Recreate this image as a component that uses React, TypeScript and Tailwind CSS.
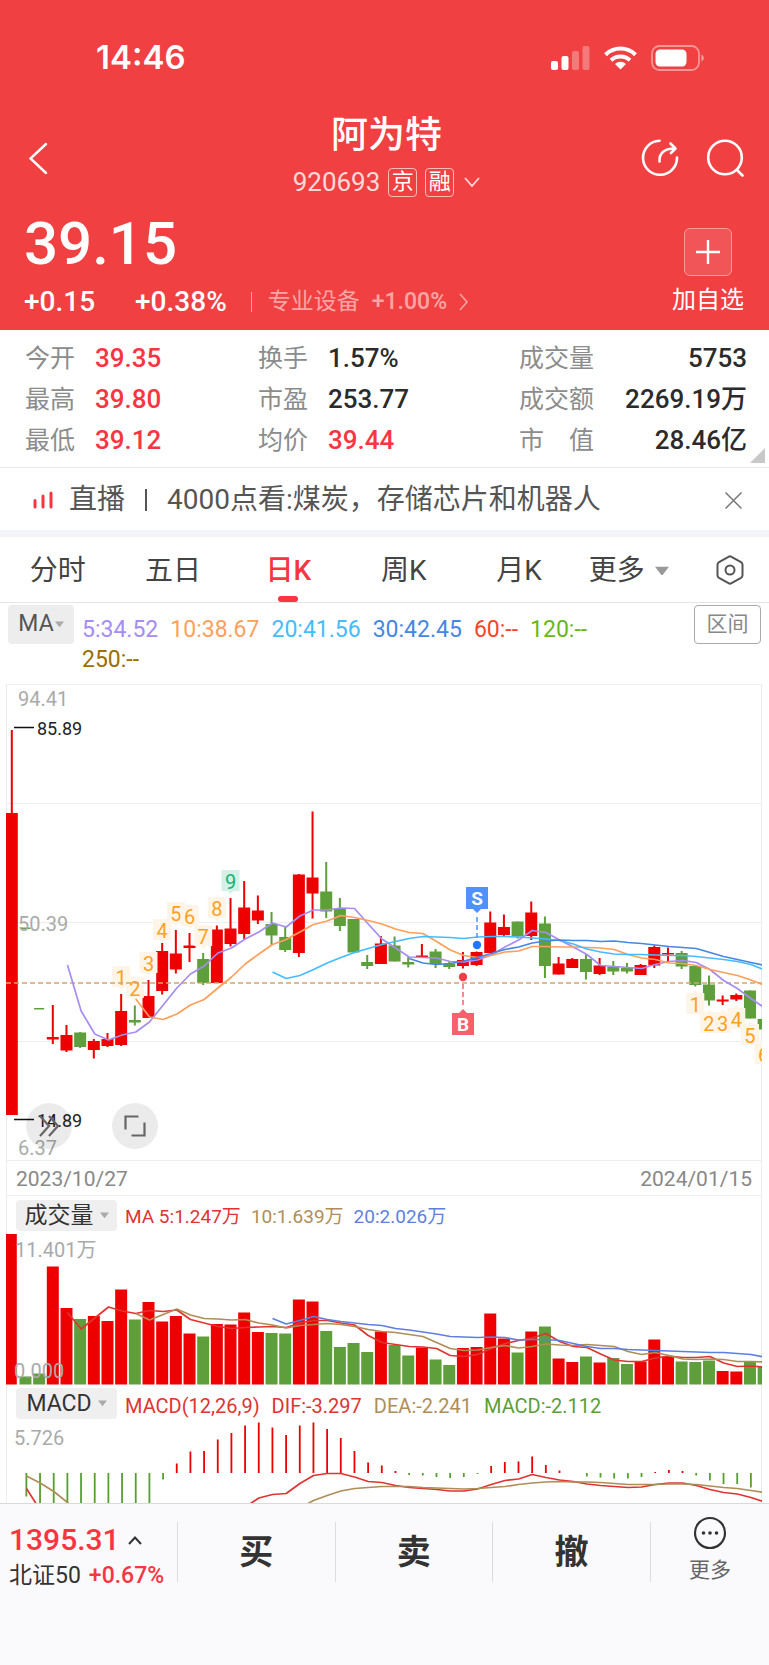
import React from 'react';

type Candle = ['r' | 'g', number, number, number, number];

const RED = '#ee0000';
const GREEN = '#5f9f3b';

// colour, high, body top, body bottom, low
const candles: Candle[] = [
    ['r', 730, 813, 1115, 1115], ['g', 928, 927.5, 929, 929], ['g', 1008, 1008, 1009.5, 1009],
    ['r', 1005, 1037, 1039.5, 1044], ['r', 1025, 1035, 1050.5, 1052], ['g', 1032, 1032.5, 1047, 1048],
    ['r', 1039, 1041, 1050, 1058.5], ['r', 1033, 1039, 1046, 1047], ['r', 994, 1011, 1045, 1046],
    ['g', 1005.5, 1020, 1022.5, 1025.5], ['r', 980, 996, 1018, 1018], ['r', 943, 951, 991, 994.5],
    ['r', 930, 953.5, 969.5, 973.5], ['r', 933, 945.5, 948, 962], ['g', 953, 959, 983, 985],
    ['r', 925.5, 929.5, 983, 983], ['r', 898, 928.5, 944, 946.5], ['r', 881, 907.5, 934, 939],
    ['r', 895.5, 910.5, 920.5, 924], ['g', 912, 924, 935.5, 945], ['g', 927, 937, 950, 952],
    ['r', 874, 874.5, 953, 957], ['r', 811.5, 877.5, 893.5, 918.5], ['g', 862, 891.5, 911.5, 918],
    ['g', 898, 908.5, 926, 931], ['g', 919, 919, 952.5, 952.5], ['g', 955, 962, 966, 969],
    ['r', 936, 943.5, 964, 964], ['g', 936.5, 945.5, 961.5, 961.5], ['g', 956.5, 962, 964.5, 967.5],
    ['r', 944, 955.5, 957.5, 957.5], ['g', 949, 951.5, 964, 968], ['g', 962, 963.5, 967, 969],
    ['r', 952, 960, 966, 968.5], ['r', 951.5, 952, 965, 966], ['r', 911.5, 922.5, 953, 953],
    ['r', 914.5, 927, 935, 936], ['g', 921.5, 921.5, 936.5, 938.5], ['r', 901.5, 912.5, 936, 940],
    ['g', 916.5, 923.5, 966, 978], ['r', 957, 963.5, 974.5, 974.5], ['r', 958, 959, 968, 968],
    ['g', 954.5, 959, 972, 979.5], ['r', 958, 965.5, 974, 975], ['g', 961, 967, 971.5, 975],
    ['g', 963, 968, 971.5, 973.5], ['r', 964, 965, 975, 975], ['r', 945.5, 947, 965.5, 968],
    ['r', 947.5, 953, 954.5, 961.5], ['g', 951, 953, 966.5, 969], ['g', 965.5, 966, 985, 986.5],
    ['g', 975.5, 984.5, 1000.5, 1005.5], ['r', 995.5, 999.5, 1001.5, 1005], ['r', 993.5, 995, 999.5, 1001],
    ['g', 990.5, 990.5, 1018.5, 1018.5], ['g', 1019, 1019, 1029.5, 1029.5],
];

const priceLines = [
    { color: '#a68cf5', from: 4, ys: [965, 1011, 1034, 1040, 1035, 1032, 1022, 1005, 988, 974, 966, 953, 948, 939, 932, 923, 927, 916, 910, 910, 908, 908.5, 924, 939, 948, 957, 957.5, 958, 961.5, 962, 960, 955, 947, 940, 930.5, 932.5, 940, 947, 954.5, 965.5, 966.5, 967.5, 968.5, 964.5, 961.5, 960.5, 962.5, 969.5, 980.5, 988.5, 998.5, 1008] },
    { color: '#ff9f5c', from: 9, ys: [999, 1017, 1019.5, 1014, 1005, 999.5, 988, 977, 964, 954, 944.5, 939.5, 932, 924.5, 921, 915.5, 917.5, 920.5, 924, 929, 932.5, 933.5, 941.5, 950, 955.5, 957.5, 955.5, 952, 951, 946.5, 946.5, 947, 947, 947.5, 948, 949.5, 954.5, 958, 959.5, 963, 963.5, 965.5, 969.5, 972.5, 975.5, 980, 985.5] },
    { color: '#45bcff', from: 19, ys: [972, 978.5, 975.5, 969.5, 963, 957.5, 952.5, 948.5, 944.5, 941.5, 938.5, 936.5, 937, 937.5, 938.5, 937, 936.5, 936.5, 937, 938, 939, 940.5, 944, 949, 952, 954, 954.5, 954.5, 955, 955.5, 955.5, 956.5, 958, 959.5, 961.5, 964.5, 970] },
    { color: '#4587e6', from: 29, ys: [958.5, 963, 964.5, 963.5, 961, 957.5, 953.5, 949.5, 947, 943, 941, 940, 940.5, 940.5, 941.5, 941, 942.5, 943.5, 945, 946.5, 947.5, 948.5, 952.5, 956.5, 959.5, 962.5, 965.5] },
];

// candle index, label, box top
const counts: [number, string, number][] = [
    [8, '1', 966], [9, '2', 977], [10, '3', 952], [11, '4', 919], [12, '5', 902], [13, '6', 905],
    [14, '7', 925], [15, '8', 897], [16, '9', 870],
    [50, '1', 993], [51, '2', 1012], [52, '3', 1012], [53, '4', 1008], [54, '5', 1024], [55, '6', 1043],
];

const volumes = [
    1234, 1376.5, 1373.5, 1266.5, 1308, 1319, 1316, 1321, 1289.5, 1319.5, 1302, 1321.5, 1316, 1333.5, 1336.5,
    1324, 1324.5, 1312.5, 1332, 1333, 1333.5, 1299.5, 1301.5, 1331, 1347, 1343, 1352, 1331.5, 1345, 1355.5,
    1347.5, 1359.5, 1365, 1348, 1347, 1313.5, 1338.5, 1352.5, 1331.5, 1326.5, 1358.5, 1362, 1356.5, 1362.5,
    1358, 1364, 1361.5, 1339.5, 1356.5, 1361.5, 1362, 1360.5, 1371, 1371.5, 1361.5, 1366.5,
];

const volumeLines = [
    { color: '#e03430', from: 4, ys: [1312.5, 1329, 1318, 1307, 1311, 1313.5, 1310.5, 1311.5, 1310, 1319.5, 1323, 1326.5, 1328.5, 1327.5, 1327, 1326.5, 1327.5, 1323, 1320.5, 1320.5, 1323, 1325, 1335.5, 1342.5, 1344.5, 1346.5, 1347, 1348.5, 1355.5, 1356.5, 1354.5, 1348.5, 1343.5, 1340.5, 1338, 1333.5, 1341.5, 1346.5, 1347.5, 1354, 1360, 1361.5, 1361.5, 1358, 1356, 1357.5, 1357.5, 1356.5, 1363, 1366.5, 1366, 1367] },
    { color: '#b08d57', from: 9, ys: [1313.5, 1320, 1314.5, 1309, 1315, 1318.5, 1319, 1320, 1319.5, 1323, 1325, 1328, 1325.5, 1324.5, 1323.5, 1324.5, 1326.5, 1329.5, 1331.5, 1332.5, 1334.5, 1336.5, 1342.5, 1348.5, 1350.5, 1350, 1347.5, 1345.5, 1348, 1346.5, 1344, 1345, 1345.5, 1344.5, 1345.5, 1346.5, 1351.5, 1354.5, 1352.5, 1355.5, 1359, 1359.5, 1359, 1359.5, 1361.5, 1361.5, 1362] },
    { color: '#5f7fe0', from: 19, ys: [1318.5, 1324, 1320.5, 1316.5, 1319.5, 1321.5, 1323, 1324.5, 1325.5, 1328.5, 1330, 1332, 1334, 1336.5, 1337, 1337.5, 1337, 1337.5, 1340, 1339.5, 1339.5, 1340.5, 1343.5, 1346.5, 1348.5, 1348.5, 1349.5, 1350, 1350.5, 1351, 1351.5, 1352, 1352.5, 1352.5, 1353.5, 1354.5, 1357] },
];

// bar ends for the histogram, the first one belongs to index 1
const macdBars = [
    1496.5, 1510, 1510, 1510, 1510, 1510, 1510, 1510, 1510, 1510, 1479.5, 1463.5, 1451.5, 1451, 1439.5, 1433,
    1425.5, 1422.5, 1427.5, 1435, 1425.5, 1422.5, 1429, 1438, 1451, 1462.5, 1465.5, 1471, 1475, 1475.5, 1477,
    1478, 1477, 1474, 1466, 1462, 1461.5, 1456.5, 1465, 1470.5, 1473, 1476.5, 1477.5, 1478.5, 1478.5, 1477,
    1472, 1470, 1471, 1475.5, 1480.5, 1484, 1484, 1487.5,
];

const macdLines = [
    { color: '#e03430', from: 1, ys: [1488.5, 1510] },
    { color: '#e03430', from: 17, ys: [1507, 1498, 1494.5, 1493.5, 1483.5, 1475.5, 1473.5, 1473.5, 1477, 1481.5, 1482.5, 1485.5, 1487.5, 1488.5, 1489.5, 1491, 1491, 1489, 1484.5, 1480.5, 1479, 1474.5, 1477.5, 1480, 1481.5, 1484, 1485.5, 1486.5, 1487.5, 1487, 1484.5, 1483, 1483, 1485.5, 1489.5, 1492.5, 1494, 1497.5, 1502] },
    { color: '#b08d57', from: 1, ys: [1476, 1483, 1491.5, 1502.5, 1514] },
    { color: '#b08d57', from: 21, ys: [1508, 1500.5, 1495.5, 1491, 1488.5, 1487.5, 1486.5, 1486.5, 1486.5, 1487.5, 1488, 1488.5, 1489, 1488.5, 1487.5, 1486.5, 1484.5, 1483, 1482, 1481.5, 1482, 1482, 1482.5, 1483.5, 1484.5, 1484.5, 1484.5, 1484, 1484, 1484.5, 1486, 1487.5, 1488.5, 1490.5, 1492.5] },
];

const stats = [
    ['今开', '39.35', true], ['换手', '1.57%', false], ['成交量', '5753', false],
    ['最高', '39.80', true], ['市盈', '253.77', false], ['成交额', '2269.19万', false],
    ['最低', '39.12', true], ['均价', '39.44', true], ['市 值', '28.46亿', false],
] as const;

const legend = [
    ['5:34.52', 'text-[#a68cf5]'], ['10:38.67', 'text-[#ff9f5c]'], ['20:41.56', 'text-[#45bcff]'],
    ['30:42.45', 'text-[#4587e6]'], ['60:--', 'text-[#f5452b]'], ['120:--', 'text-[#66b81a]'],
    ['250:--', 'text-[#9c6f00]'],
];

const cx = (i: number) => 11.8 + 13.67 * i;

const Lines = ({ lines }: { lines: { color: string; from: number; ys: number[] }[] }) => (
    <>
        {lines.map((line, idx) => (
            <polyline
                key={idx}
                fill="none"
                stroke={line.color}
                strokeWidth="1.7"
                strokeLinejoin="round"
                points={line.ys.map((y, i) => `${cx(line.from + i) + 1},${y}`).join(' ')}
            />
        ))}
    </>
);

const Frame = ({ top, height }: { top: number; height: number }) => (
    <path d={`M6.5 ${top}v${height}M761.5 ${top}v${height}`} stroke="#ededed" />
);

const PriceChart = () => (
    <svg viewBox="6 684 756 477" className="block w-full">
        <Frame top={684} height={477} />
        <path d="M6 684.5H762M6 803.5H762M6 922.5H762M6 1041.5H762M6 1160.5H762" stroke="#ededed" />
        {candles.map(([c, hi, top, bottom, low], i) => {
            const w = i === 1 || i === 2 ? 10 : 12;
            return (
                <g key={i} fill={c === 'r' ? RED : GREEN}>
                    <rect x={cx(i) - 1} y={hi} width="2" height={low - hi} />
                    <rect x={cx(i) - w / 2} y={top} width={w} height={bottom - top} />
                </g>
            );
        })}
        {counts.map(([i, label, top]) => (
            <g key={`${i}${label}`}>
                <path
                    d={i < 50
                        ? `M${cx(i) - 9} ${top}h18v21h-6l-3 3l-3 -3h-6z`
                        : `M${cx(i) - 9} ${top}h6l3 -3l3 3h6v21h-18z`}
                    fill={label === '9' ? '#d3f1e6' : '#fff4e8'}
                />
                <text x={cx(i)} y={top + 19} fontSize="20" textAnchor="middle" fill={label === '9' ? '#12b374' : '#ffa11a'}>
                    {label}
                </text>
            </g>
        ))}
        <path d="M6 983H762" stroke="#d0a66f" strokeWidth="1.5" strokeDasharray="5 3" />
        <Lines lines={priceLines} />

        <path d="M466 887h22v22h-7l-4 4l-4 -4h-7z" fill="#4f91ff" />
        <text x="477" y="905" fontSize="19" fontWeight="700" textAnchor="middle" fill="#fff">S</text>
        <path d="M477 917v24" stroke="#4f91ff" strokeWidth="1.5" strokeDasharray="5 3" />
        <circle cx="477" cy="945" r="4.2" fill="#2277ff" />
        <circle cx="463" cy="977" r="4.2" fill="#f53d47" />
        <path d="M463 984v24" stroke="#f9606b" strokeWidth="1.5" strokeDasharray="5 3" />
        <path d="M452 1013h7l4 -4l4 4h7v22h-22z" fill="#f9606b" />
        <text x="463" y="1031" fontSize="19" fontWeight="700" textAnchor="middle" fill="#fff">B</text>

        <g fontSize="20" fill="#aaa">
            <text x="18" y="706">94.41</text>
            <text x="18" y="931">50.39</text>
            <text x="18" y="1155">6.37</text>
        </g>
        <path d="M14 727.5h20M14 1119.5h20" stroke="#111" strokeWidth="1.6" />
        <g fontSize="18" fill="#222">
            <text x="37" y="735">85.89</text>
            <text x="37" y="1127">14.89</text>
        </g>
    </svg>
);

const VolumeChart = () => (
    <svg viewBox="6 1234 756 151" className="block w-full">
        <Frame top={1234} height={151} />
        {volumes.map((top, i) => (
            <rect
                key={i}
                x={cx(i) - 6}
                y={top}
                width={i === 0 ? 11 : 12}
                height={1384.5 - top}
                fill={candles[i][0] === 'r' ? RED : GREEN}
            />
        ))}
        <Lines lines={volumeLines} />
        <g fontSize="20" fill="#aaa">
            <text x="15" y="1257">11.401万</text>
            <text x="14" y="1378">0.000</text>
        </g>
    </svg>
);

const MacdChart = () => (
    <svg viewBox="6 1422 756 81" className="block w-full">
        <Frame top={1422} height={81} />
        {macdBars.map((y, i) => (
            <rect
                key={i}
                x={cx(i + 1)}
                y={Math.min(y, 1473)}
                width="1.8"
                height={Math.abs(y - 1473)}
                fill={y < 1473 ? RED : '#55a02e'}
            />
        ))}
        <Lines lines={macdLines} />
        <text x="14" y="1445" fontSize="20" fill="#aaa">5.726</text>
    </svg>
);

const Triangle = ({ className }: { className: string }) => (
    <svg viewBox="0 0 10 7" className={className}><path d="M0 0.5h10L5 7z" fill="currentColor" /></svg>
);

const Chip = ({ label }: { label: string }) => (
    <button className="flex h-[31px] w-[101px] shrink-0 items-center justify-center gap-1.5 rounded bg-[#efefef] text-[23px] leading-none text-[#333]">
        {label}
        <Triangle className="w-[9px] text-[#aaa]" />
    </button>
);

const StatusBar = () => (
    <div className="flex h-11 items-center justify-between pr-[63px] pl-24">
        <span className="font-['Inter',sans-serif] text-[33px] font-semibold">14:46</span>
        <svg viewBox="0 0 156 28" className="h-7 w-[156px]" fill="#fff">
            <rect x="1" y="17" width="7" height="9" rx="2" />
            <rect x="11.5" y="12" width="7" height="14" rx="2" />
            <rect x="22" y="7" width="7" height="19" rx="2" opacity=".3" />
            <rect x="32.5" y="2" width="7" height="24" rx="2" opacity=".3" />
            <path d="M70.500 25.500l-5.500 -5.500a8 8 0 0 1 11 0z" />
            <g fill="none" stroke="#fff" strokeWidth="4">
                <path d="M61 16.200a14 14 0 0 1 19 0" />
                <path d="M55.500 10.700a21.500 21.500 0 0 1 30 0" />
            </g>
            <rect x="102" y="2" width="47" height="24" rx="7.500" fill="none" stroke="#fff" strokeWidth="1.8" opacity=".45" />
            <rect x="105.500" y="5.500" width="31" height="17" rx="4.500" />
            <path d="M151.500 10.500c3 1.500 3 5.500 0 7z" opacity=".5" />
        </svg>
    </div>
);

const Header = () => (
    <header className="bg-[#f04042] pt-9 text-white">
        <StatusBar />
        <div className="mt-7 grid h-[100px] grid-cols-[1fr_auto_1fr] items-center pr-6 pl-7">
            <button aria-label="返回" className="w-5">
                <svg viewBox="0 0 20 32" className="w-5" fill="none" stroke="#fff" strokeWidth="2.4" strokeLinecap="round">
                    <path d="M18 2L2.500 16.500L18 31" />
                </svg>
            </button>
            <div className="text-center">
                <h1 className="text-[37px] leading-[48px] font-medium">阿为特</h1>
                <div className="flex h-11 items-center justify-center gap-2 text-[26px]">
                    <span className="text-[#ffd9d9]">920693</span>
                    <span className="flex h-[29px] w-[29px] items-center justify-center rounded border border-[#fbb] text-[22px] leading-none">京</span>
                    <span className="flex h-[29px] w-[29px] items-center justify-center rounded border border-[#fbb] text-[22px] leading-none">融</span>
                    <svg viewBox="0 0 16 10" className="ml-0.5 w-4" fill="none" stroke="#ffd9d9" strokeWidth="1.8">
                        <path d="M1 1l7 8l7 -8" />
                    </svg>
                </div>
            </div>
            <div className="flex justify-end gap-7">
                <button aria-label="分享">
                    <svg viewBox="0 0 38 38" className="w-[38px]" fill="none" stroke="#fff" strokeWidth="2.600" strokeLinecap="round" strokeLinejoin="round">
                        <path d="M18.500 1.800A17 17 0 1 0 36 18.500" />
                        <path d="M18.500 22.500c-.5 -8 4.500 -13 15 -13" />
                        <path d="M29.500 4.500l5 5l-4.500 4.500" />
                    </svg>
                </button>
                <button aria-label="搜索">
                    <svg viewBox="0 0 38 38" className="w-[38px]" fill="none" stroke="#fff" strokeWidth="2.600" strokeLinecap="round">
                        <circle cx="18" cy="18.500" r="16.800" />
                        <path d="M30.500 31.500l5 5" />
                    </svg>
                </button>
            </div>
        </div>
        <div className="flex h-[122px] justify-between pr-[25px] pl-6">
            <div>
                <div className="mt-1 text-[60px] leading-[64px] font-medium">39.15</div>
                <div className="mt-2 flex h-9 items-center text-[28px] font-medium">
                    <span>+0.15</span>
                    <span className="ml-10">+0.38%</span>
                    <span className="ml-6 h-5 w-px bg-[#f9a5a5]" />
                    <a href="#" className="ml-4 flex items-center gap-3 text-[23px] font-normal text-[#f9a5a5]">
                        <span>专业设备</span>
                        <span className="font-medium">+1.00%</span>
                        <svg viewBox="0 0 9 18" className="w-[9px]" fill="none" stroke="currentColor" strokeWidth="1.600">
                            <path d="M1 1l7 8l-7 8" />
                        </svg>
                    </a>
                </div>
            </div>
            <button className="mt-5 flex flex-col items-center text-2xl leading-9">
                <span className="mb-1.5 flex h-12 w-12 items-center justify-center rounded-md border border-[#f79a9a] bg-[#f25557]">
                    <svg viewBox="0 0 24 24" className="w-6" stroke="#fff" strokeWidth="2.400"><path d="M12 0v24M0 12h24" /></svg>
                </span>
                加自选
            </button>
        </div>
    </header>
);

const App: React.FC = () => {
    return (
        <div className="flex min-h-screen flex-col bg-[#fafafc] font-['Roboto','Noto_Sans_CJK_SC',sans-serif] text-[#333]">
            <Header />

            <main className="bg-white">
                <section className="relative grid grid-cols-[233fr_261fr_228fr] border-b border-[#e8e9ec] px-[22px] pt-2 pb-1.5 pl-[25px] text-[26px] leading-[41px]">
                    {stats.map(([label, value, up], idx) => (
                        <div key={label} className={idx % 3 === 2 ? 'flex justify-between' : 'flex gap-5'}>
                            <span className="text-[25px] whitespace-pre text-[#8c8c8c]">{label.replace(' ', '\u3000')}</span>
                            <span className={up ? 'font-medium text-[#fa3542]' : 'font-medium text-[#2b2b2b]'}>{value}</span>
                        </div>
                    ))}
                    <svg viewBox="0 0 15 15" className="absolute right-1 bottom-1 w-[15px]"><path d="M15 0v15H0z" fill="#c8c8c8" /></svg>
                </section>

                <section className="flex h-[62px] items-center px-[27px] pt-0.5 pl-[33px] text-[28px] text-[#555]">
                    <svg viewBox="0 0 20 18" className="mr-4 w-5" stroke="#fa3542" strokeWidth="3" strokeLinecap="round">
                        <path d="M2 9.500v6.500M10 5v11M18 2v14" />
                    </svg>
                    <a href="#" className="flex items-center whitespace-nowrap">
                        直播
                        <span className="mx-5 h-[22px] w-0.5 bg-[#555]" />
                        4000点看:煤炭，存储芯片和机器人
                    </a>
                    <button aria-label="关闭" className="ml-auto">
                        <svg viewBox="0 0 17 17" className="w-[17px]" stroke="#777" strokeWidth="1.500"><path d="M0.500 0.500l16 16M16.500 0.500l-16 16" /></svg>
                    </button>
                </section>
                <div className="h-[7px] bg-[#f3f4f9]" />

                <nav className="flex h-[66px] items-stretch border-b border-[#e4e5e8] text-[28px] text-[#444]">
                    {['分时', '五日', '日K', '周K', '月K'].map((tab) => (
                        <button
                            key={tab}
                            className={tab === '日K' ? 'relative w-[15%] pt-0.5 font-medium text-[#fa3542]' : 'w-[15%] pt-0.5'}
                        >
                            {tab}
                            {tab === '日K' && <span className="absolute bottom-0 left-1/2 h-1.5 w-5 -translate-x-1/2 rounded-full bg-[#fa3542]" />}
                        </button>
                    ))}
                    <button className="flex items-center gap-2.5 pt-0.5 pl-3">
                        更多
                        <Triangle className="w-3.5 text-[#999]" />
                    </button>
                    <button aria-label="设置" className="mr-[25px] ml-auto">
                        <svg viewBox="0 0 28 30" className="w-7" fill="none" stroke="#555" strokeWidth="2" strokeLinejoin="round">
                            <path d="M12.500 1.800q1.500 -.9 3 0l9.500 5.400q1.500 .9 1.500 2.600v10.400q0 1.700 -1.500 2.600l-9.500 5.400q-1.500 .9 -3 0l-9.500 -5.400q-1.500 -.9 -1.500 -2.600v-10.400q0 -1.700 1.500 -2.600z" />
                            <circle cx="14" cy="15" r="4.500" />
                        </svg>
                    </button>
                </nav>

                <div className="flex h-[81px] items-start px-2 pt-0.5">
                    <button className="flex h-[39px] w-[66px] shrink-0 items-center justify-center gap-px rounded bg-[#ededed] text-[23px] text-[#555]">
                        MA
                        <Triangle className="w-[9px] text-[#aaa]" />
                    </button>
                    <div className="ml-2 flex flex-1 flex-wrap gap-x-3 pt-2.5 pr-14 text-[23px] leading-[30px]">
                        {legend.map(([text, color]) => (
                            <span key={text} className={color}>{text}</span>
                        ))}
                    </div>
                    <button className="h-[39px] w-[67px] shrink-0 rounded border border-[#aaa] text-[21px] leading-none text-[#888]">区间</button>
                </div>

                <div className="mx-[6px] mr-[7px]">
                    <div className="relative">
                        <PriceChart />
                        <button aria-label="展开" className="absolute bottom-3 left-5 flex h-[46px] w-[46px] items-center justify-center rounded-full bg-black/8">
                            <svg viewBox="0 0 22 22" className="w-[22px]" fill="none" stroke="#666" strokeWidth="2.200">
                                <path d="M2 1l9 10l-9 10M11 1l9 10l-9 10" />
                            </svg>
                        </button>
                        <button aria-label="全屏" className="absolute bottom-3 left-[106px] flex h-[46px] w-[46px] items-center justify-center rounded-full bg-[#ebebeb]">
                            <svg viewBox="0 0 22 22" className="w-[22px]" fill="none" stroke="#666" strokeWidth="2.200">
                                <path d="M1.500 14.500v-13h13M20.500 7.500v13h-13" />
                            </svg>
                        </button>
                    </div>
                    <div className="flex h-[35px] items-center justify-between border-x border-b border-[#ededed] px-[9px] pt-1 text-[21px] text-[#888]">
                        <span>2023/10/27</span>
                        <span>2024/01/15</span>
                    </div>
                    <div className="flex h-[38px] items-center border-x border-[#ededed] pl-[9px]">
                        <Chip label="成交量" />
                        <div className="ml-2 flex gap-2.5 pt-1 text-[19px]">
                            <span className="text-[#e03430]">MA 5:1.247万</span>
                            <span className="text-[#b08d57]">10:1.639万</span>
                            <span className="text-[#5f7fe0]">20:2.026万</span>
                        </div>
                    </div>
                    <VolumeChart />
                    <div className="flex h-[37px] items-center border-x border-[#ededed] pl-[9px]">
                        <Chip label="MACD" />
                        <div className="ml-2 flex gap-3 pt-1 text-xl">
                            <span className="text-[#e03430]">MACD(12,26,9)</span>
                            <span className="text-[#e03430]">DIF:-3.297</span>
                            <span className="text-[#b08d57]">DEA:-2.241</span>
                            <span className="text-[#5b9e38]">MACD:-2.112</span>
                        </div>
                    </div>
                    <MacdChart />
                </div>
            </main>

            <footer className="flex items-start border-t border-[#d9dade] pt-[18px] pb-20">
                <button className="h-[62px] w-[23%] pl-[9px] text-left whitespace-nowrap">
                    <span className="flex items-center gap-2 text-[30px] leading-9 font-medium text-[#fa3542]">
                        1395.31
                        <svg viewBox="0 0 14 9" className="w-3.5" fill="none" stroke="#333" strokeWidth="2"><path d="M1 8l6 -6.500l6 6.500" /></svg>
                    </span>
                    <span className="flex items-center gap-2 text-[23px] leading-9">
                        北证50
                        <span className="font-medium text-[#fa3542]">+0.67%</span>
                    </span>
                </button>
                {['买', '卖', '撤'].map((action) => (
                    <button key={action} className="h-[60px] w-[20.5%] border-l border-[#dcdde0] text-[34px] font-bold">{action}</button>
                ))}
                <button className="flex h-[60px] flex-1 flex-col items-center border-l border-[#dcdde0] text-[21px] leading-8 text-[#666]">
                    <svg viewBox="0 0 34 34" className="-mt-1.5 mb-1 w-[34px] shrink-0" fill="#333">
                        <circle cx="17" cy="17" r="15" fill="none" stroke="#333" strokeWidth="2.200" />
                        <circle cx="10.500" cy="17" r="1.800" />
                        <circle cx="17" cy="17" r="1.800" />
                        <circle cx="23.500" cy="17" r="1.800" />
                    </svg>
                    更多
                </button>
            </footer>
        </div>
    );
};

export default App;
